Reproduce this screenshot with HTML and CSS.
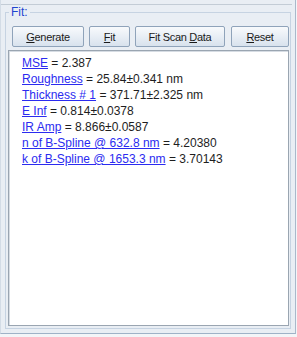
FILE: index.html
```html
<!DOCTYPE html>
<html>
<head>
<meta charset="utf-8">
<link rel="stylesheet" href="styles.css">
</head>
<body>
<div class="panel">
  <div class="topline"></div>
  <div class="group">
    <span class="group-title">Fit:</span>
    <div class="buttons">
      <button class="btn btn-generate"><u>G</u>enerate</button>
      <button class="btn btn-fit"><u>F</u>it</button>
      <button class="btn btn-scan">Fit Scan <u>D</u>ata</button>
      <button class="btn btn-reset"><u>R</u>eset</button>
    </div>
    <div class="results">
      <div class="row"><a class="param">MSE</a> = 2.387</div>
      <div class="row"><a class="param">Roughness</a> = 25.84±0.341 nm</div>
      <div class="row"><a class="param">Thickness # 1</a> = 371.71±2.325 nm</div>
      <div class="row"><a class="param">E Inf</a> = 0.814±0.0378</div>
      <div class="row"><a class="param">IR Amp</a> = 8.866±0.0587</div>
      <div class="row"><a class="param">n of B-Spline @ 632.8 nm</a> = 4.20380</div>
      <div class="row"><a class="param">k of B-Spline @ 1653.3 nm</a> = 3.70143</div>
    </div>
  </div>
</div>
</body>
</html>
```

FILE: styles.css
```css
html, body {
  margin: 0;
  padding: 0;
}
body {
  width: 297px;
  height: 337px;
  background: #f3f5f8;
  overflow: hidden;
  font-family: "Liberation Sans", Arial, sans-serif;
}
.panel {
  box-sizing: border-box;
  width: 296px;
  height: 334px;
  background: #e9eef4;
  border-left: 1px solid #d3dce6;
  border-right: 1px solid #a9b9cb;
  border-bottom: 1px solid #9fb2c7;
  display: flex;
  flex-direction: column;
}
.topline {
  height: 4px;
  border-bottom: 1px solid #c3ccd6;
  margin-right: 3px;
  flex: none;
}
.group {
  position: relative;
  margin: 7px 4px 4px 4px;
  border: 1px solid #c6d3e2;
  padding: 13px 1px 2px 2px;
  display: flex;
  flex-direction: column;
  flex: 1;
}
.group-title {
  position: absolute;
  top: -8px;
  left: 3px;
  padding: 0 2px;
  background: #e9eef4;
  color: #1f45d0;
  font-size: 12px;
  line-height: 14px;
}
.buttons {
  display: flex;
  gap: 5px;
  padding-left: 4px;
  height: 21px;
  margin-bottom: 3px;
}
.btn {
  box-sizing: border-box;
  height: 21px;
  padding: 0;
  border: 1px solid #8fa3ba;
  border-radius: 2px;
  background: linear-gradient(#f8fafc, #e8eef5 50%, #d8e2ed);
  font-family: "Liberation Sans", Arial, sans-serif;
  font-size: 11px;
  letter-spacing: -0.3px;
  color: #1a1a1a;
}
.btn u {
  text-decoration: underline;
}
.btn-generate { width: 72px; }
.btn-fit { width: 41px; }
.btn-scan { width: 90px; }
.btn-reset { width: 58px; margin-left: 1px; }
.results {
  flex: 1;
  background: #ffffff;
  border: 1px solid #9aa5b1;
  box-shadow: inset 1px 1px 0 #d6dce3;
  padding: 4px 0 0 13px;
  font-size: 12px;
  line-height: 16px;
  color: #1e1e1e;
}
.row {
  white-space: nowrap;
}
.param {
  color: #2b2bf0;
  text-decoration: underline;
}
```
